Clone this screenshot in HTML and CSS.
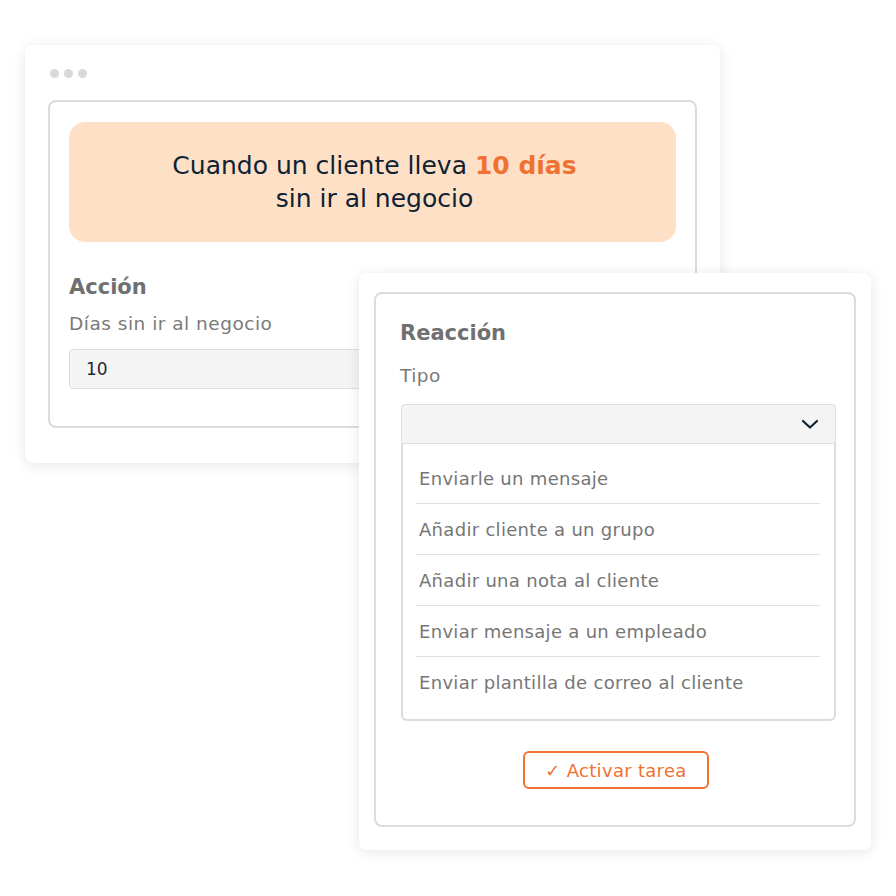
FILE: index.html
```html
<html>
<head>
    <title>Automatización</title>
    <link rel="stylesheet" href="styles.css">
</head>
<body>
<div class="stage">

    <div class="window window-action">
        <div class="dots"><span></span><span></span><span></span></div>
        <div class="panel">
            <div class="banner">
                <p>Cuando un cliente lleva <b>10 días</b><br>sin ir al negocio</p>
            </div>
            <div class="title">Acción</div>
            <div class="label">Días sin ir al negocio</div>
            <div class="field">10</div>
        </div>
    </div>

    <div class="window window-reaction">
        <div class="panel">
            <div class="title">Reacción</div>
            <div class="label">Tipo</div>
            <div class="select">
                <svg width="18" height="12" viewBox="0 0 18 12">
                    <path d="M2 3 L9 9.5 L16 3" fill="none" stroke="#0f2233" stroke-width="2.2" stroke-linecap="round" stroke-linejoin="round"/>
                </svg>
            </div>
            <ul class="options">
                <li>Enviarle un mensaje</li>
                <li>Añadir cliente a un grupo</li>
                <li>Añadir una nota al cliente</li>
                <li>Enviar mensaje a un empleado</li>
                <li>Enviar plantilla de correo al cliente</li>
            </ul>
            <div class="actions">
                <button type="button"><span class="check">✓</span> Activar tarea</button>
            </div>
        </div>
    </div>

</div>
</body>
</html>
```

FILE: styles.css
```css
body {
    margin: 0;
    background: #fff;
    font-family: "DejaVu Sans", "Open Sans", sans-serif;
}

.stage {
    position: relative;
    width: 896px;
    height: 896px;
}

.window {
    position: absolute;
    background: #fff;
    border-radius: 8px;
    box-shadow: 0 2px 14px rgba(0, 0, 0, 0.10);
    box-sizing: border-box;
}

.window-action {
    left: 25px;
    top: 45px;
    width: 695px;
    height: 418px;
    padding: 24px 23px 35px 23px;
}

.window-reaction {
    left: 359px;
    top: 273px;
    width: 512px;
    height: 577px;
    padding: 19px 15px 23px 15px;
}

.dots {
    display: flex;
    gap: 5px;
    margin-left: 2px;
    height: 31px;
}

.dots span {
    width: 9px;
    height: 9px;
    border-radius: 50%;
    background: #d9d9d9;
}

.panel {
    border: 2px solid #dcdcdc;
    border-radius: 8px;
    box-sizing: border-box;
    height: 100%;
}

.window-action .panel {
    height: 328px;
    padding: 20px 19px;
}

.window-reaction .panel {
    padding: 26px 18px 0 25px;
}

.banner {
    background: #fee0c6;
    border-radius: 16px;
    height: 120px;
    display: flex;
    justify-content: center;
    align-items: center;
    text-align: center;
    color: #0f2233;
    font-size: 25px;
    line-height: 33px;
}

.banner p {
    margin: 0 0 0 4px;
}

.banner b {
    color: #f07232;
    font-weight: 600;
}

.title {
    color: #707070;
    font-size: 21px;
    font-weight: 600;
    line-height: 26px;
}

.window-action .title {
    margin-top: 32px;
}

.label {
    color: #7a7a7a;
    font-size: 18.5px;
    letter-spacing: 0.5px;
    line-height: 24px;
    margin-top: 12px;
}

.field {
    margin-top: 13px;
    height: 40px;
    box-sizing: border-box;
    background: #f4f4f4;
    border: 1px solid #dedede;
    border-radius: 4px;
    padding: 0 16px;
    display: flex;
    align-items: center;
    color: #1f2a33;
    font-size: 17px;
}

.window-reaction .label {
    margin-top: 18px;
}

.window-reaction .title,
.window-reaction .label {
    margin-left: -1px;
}

.select {
    margin-top: 16px;
    height: 40px;
    box-sizing: border-box;
    background: #f4f4f4;
    border: 1px solid #dedede;
    border-radius: 4px 4px 0 0;
    display: flex;
    align-items: center;
    justify-content: flex-end;
    padding-right: 16px;
}

.options {
    list-style: none;
    margin: 0;
    padding: 9px 14px 11px 13px;
    border: 2px solid #dcdcdc;
    border-top: none;
    border-radius: 0 0 6px 6px;
}

.options li {
    height: 51px;
    box-sizing: border-box;
    display: flex;
    align-items: center;
    padding-left: 3px;
    color: #767676;
    font-size: 18px;
    letter-spacing: 0.3px;
    border-bottom: 1px solid #e0e0e0;
}

.options li:last-child {
    border-bottom: none;
}

.actions {
    display: flex;
    justify-content: center;
    margin-top: 30px;
    padding-right: 5px;
}

button {
    background: #fff;
    border: 2px solid #f07232;
    border-radius: 6px;
    color: #f07232;
    font-family: "DejaVu Sans", "Open Sans", sans-serif;
    font-size: 18px;
    letter-spacing: 0.3px;
    height: 38px;
    width: 186px;
    cursor: pointer;
}

.check {
    font-size: 18px;
}
```
